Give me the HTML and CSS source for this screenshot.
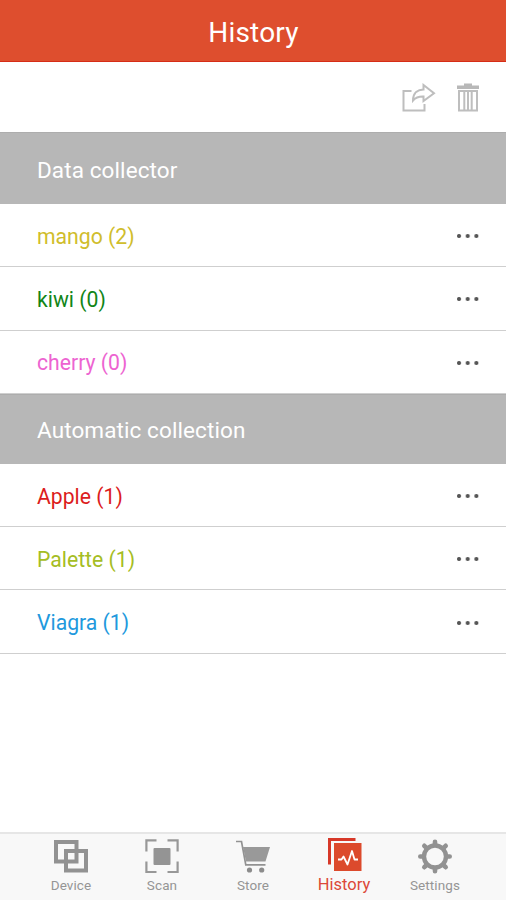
FILE: index.html
```html
<!DOCTYPE html>
<html lang="en">
<head>
<meta charset="utf-8">
<title>History</title>
<link rel="stylesheet" href="styles.css">
</head>
<body>
<div class="app">
  <header class="header"><h1>History</h1></header>
  <div class="toolbar">
    <svg class="share" width="34" height="30" viewBox="0 0 34 30"><path d="M9.500 8H1.500V27.500H22.500V21M11 17.500C11 9.500 16 6.500 21.500 6.500V2L32 10.200L21.500 18V13.500C17 13.300 14 14 11 17.500Z"/></svg>
    <svg class="trash" width="22" height="30" viewBox="0 0 22 30"><path class="solid" d="M0 2.500H7V.5H15V2.500H22V6H0Z"/><path d="M2 8H20V27.500H2ZM7.300 9V27M11 9V27M14.700 9V27"/></svg>
  </div>
  <main>
    <h2 class="section first"><span>Data collector</span></h2>
    <ul class="list">
      <li class="row mango"><span>mango (2)</span><i class="more"></i></li>
      <li class="row kiwi"><span>kiwi (0)</span><i class="more"></i></li>
      <li class="row cherry"><span>cherry (0)</span><i class="more"></i></li>
    </ul>
    <h2 class="section"><span>Automatic collection</span></h2>
    <ul class="list">
      <li class="row apple"><span>Apple (1)</span><i class="more"></i></li>
      <li class="row palette"><span>Palette (1)</span><i class="more"></i></li>
      <li class="row viagra"><span>Viagra (1)</span><i class="more"></i></li>
    </ul>
  </main>
  <nav class="tabs">
    <a class="tab"><svg width="36" height="36" viewBox="0 0 36 36"><g fill="none" stroke="#929292" stroke-width="4"><path d="M3 3H23.500V22.500H3Z"/><path d="M13 12H33V31.400H13Z"/></g></svg><span>Device</span></a>
    <a class="tab"><svg width="36" height="36" viewBox="0 0 36 36"><path d="M12.500 1.400H2.400V12.500M23.500 1.400H33.600V12.500M2.400 22.500V33H12.500M33.600 22.500V33H23.500" fill="none" stroke="#989898" stroke-width="2.200"/><rect x="9.500" y="9" width="17" height="17" rx="1" fill="#949494"/></svg><span>Scan</span></a>
    <a class="tab"><svg width="36" height="36" viewBox="0 0 36 36"><path d="M8 8H35L30.500 22.500H11Z" fill="#999"/><path d="M1 2.500H6.500L10.800 25.800H30.500" fill="none" stroke="#929292" stroke-width="1.700"/><circle cx="14.500" cy="31" r="2.600" fill="#8c8c8c"/><circle cx="26.700" cy="31" r="2.600" fill="#8c8c8c"/></svg><span>Store</span></a>
    <a class="tab active"><svg width="36" height="36" viewBox="0 0 36 36"><path d="M3.500 25.500V.5H29.500" fill="none" stroke="#d73829" stroke-width="3"/><rect x="8" y="4" width="27.500" height="28" fill="#dc4a2c"/><path d="M12 20.500H15.500L17.500 17.500L21.500 25.500L26 12L28.500 20.500H32" fill="none" stroke="#fff" stroke-width="1.800" stroke-linejoin="round"/></svg><span>History</span></a>
    <a class="tab"><svg width="36" height="36" viewBox="0 0 36 36"><g transform="translate(18 17.500)"><circle r="11" fill="none" stroke="#929292" stroke-width="4.400"/><g stroke="#929292" stroke-width="4.600" stroke-linecap="round"><path d="M0-14.700V-12M0 14.700V12M-14.700 0H-12M14.700 0H12M-10.700-10.700L-8.800-8.800M10.700-10.700L8.800-8.800M-10.700 10.700L-8.800 8.800M10.700 10.700L8.800 8.800"/></g></g></svg><span>Settings</span></a>
  </nav>
</div>
</body>
</html>
```
FILE: styles.css
```css
* { box-sizing: border-box; }
body { margin: 0; background: #fff; font-family: Roboto, sans-serif; }
.app { height: 900px; display: flex; flex-direction: column; }
.header {
  height: 62px;
  flex: none;
  display: flex;
  align-items: center;
  justify-content: center;
  padding: 4px 0 0 1px;
  background: #de4e2e;
  border-bottom: 1px solid #d62d17;
}
h1 { margin: 0; color: #fff; font-size: 28px; font-weight: 400; letter-spacing: .2px; }
.toolbar {
  height: 70px;
  flex: none;
  display: flex;
  justify-content: flex-end;
  gap: 21px;
  padding: 21px 27px 0 0;
}
.toolbar path { fill: none; stroke: #bebebe; stroke-width: 2; }
.toolbar .solid { fill: #b8b8b8; stroke: none; }
main { flex: 1; }
.section {
  height: 70px;
  margin: 0;
  padding: 2px 37px 0;
  display: flex;
  align-items: center;
  background: #b7b7b7;
  border-top: 1px solid #adadad;
  color: #fff;
  font-size: 22.500px;
  font-weight: 400;
  letter-spacing: .1px;
}
.section.first { height: 72px; padding-top: 2px; }
.list { margin: 0; padding: 0; list-style: none; }
.row {
  height: 63.300px;
  padding: 2px 27px 0 37px;
  display: flex;
  align-items: center;
  justify-content: space-between;
  border-bottom: 1px solid #cfcfcf;
  font-size: 21.200px;
}
.more {
  width: 22px;
  height: 4px;
  background: radial-gradient(circle at 2px 2px, #555 1.500px, transparent 2.500px) 0 0 / 8.700px 4px;
}
.mango { color: #d0bd2c; }
.kiwi { color: #118517; }
.cherry { color: #ed64d1; }
.apple { color: #dc1c20; }
.palette { color: #a5bd24; }
.viagra { color: #2199dd; }
.tabs {
  height: 68px;
  flex: none;
  display: flex;
  justify-content: center;
  border-top: 2px solid #e6e6e6;
  background: #f8f8f8;
}
.tab {
  width: 91px;
  padding-top: 5px;
  display: flex;
  flex-direction: column;
  align-items: center;
  color: #959595;
  font-size: 13.500px;
  letter-spacing: .1px;
}
.tab svg { display: block; overflow: visible; }
.tab span { line-height: 20px; }
.active { color: #dc4838; font-size: 16.500px; letter-spacing: 0; }
```
